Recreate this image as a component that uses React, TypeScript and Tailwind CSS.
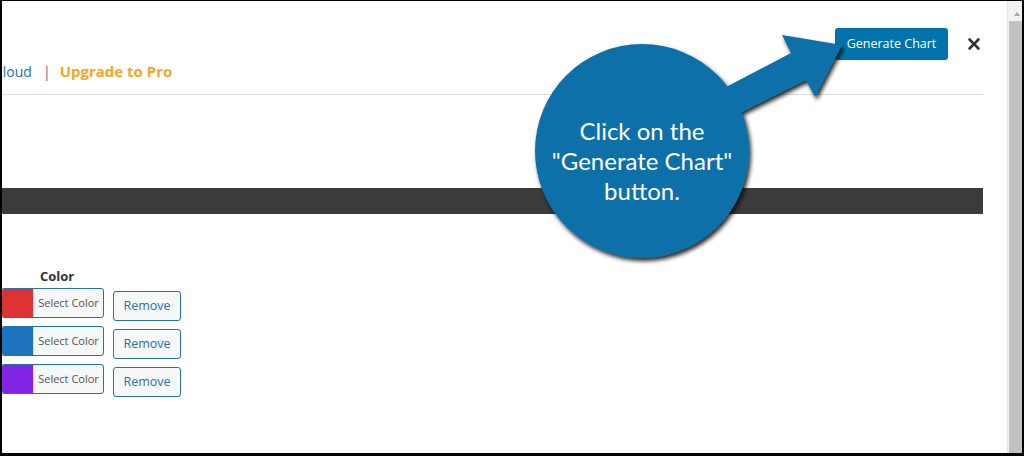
import { X } from "lucide-react";

const rows = [
  { key: "red", swatch: "bg-[#dd3333]" },
  { key: "blue", swatch: "bg-[#1e73be]" },
  { key: "purple", swatch: "bg-[#8224e3]" },
];

function Callout() {
  return (
    <svg
      className="pointer-events-none absolute left-0 top-0"
      width="1024"
      height="456"
      viewBox="0 0 1024 456"
      aria-hidden
    >
      <defs>
        <filter id="callout-shadow" x="-20%" y="-20%" width="140%" height="140%">
          <feDropShadow dx="2" dy="3" stdDeviation="2" floodColor="#000" floodOpacity="0.85" />
        </filter>
      </defs>
      <g filter="url(#callout-shadow)" fill="#0a6fa8">
        <circle cx="642" cy="151" r="107" />
        <polygon points="700,100 728,86 791,53 782,35 842,45 815,97 806,80 742,112 718,128" />
      </g>
      <g
        fill="#ffffff"
        fontFamily="Lato, 'Open Sans', sans-serif"
        fontSize="24"
        textAnchor="middle"
      >
        <text x="642" y="140">Click on the</text>
        <text x="642" y="170">"Generate Chart"</text>
        <text x="642" y="200">button.</text>
      </g>
    </svg>
  );
}

export default function App() {
  return (
    <div
      className="relative flex h-[456px] w-[1024px] overflow-hidden bg-black pb-[3px] pl-[2px] pr-[2px] pt-[1px]"
      style={{ fontFamily: "'Open Sans', 'Noto Sans', sans-serif" }}
    >
      <div className="flex-1 overflow-hidden bg-white">
        <div className="mr-[24px] border-b border-[#dcdcde] pb-[13px]">
          <div className="flex items-center justify-end pt-[27px]">
            <button
              type="button"
              className="h-[32px] w-[113px] rounded-[3px] bg-[#0073aa] text-[12.5px] text-white"
            >
              Generate Chart
            </button>
            <X className="ml-[17px] mr-0 text-[#333]" size={18} strokeWidth={3.5} />
          </div>
          <div className="mt-[1px] flex h-[20px] items-center text-[14px]">
            <span className="-ml-[8px] text-[#2271b1]">Cloud</span>
            <span className="ml-[11px] text-[#646970]">|</span>
            <span className="ml-[9px] text-[15px] font-bold text-[#f6a623]">Upgrade to Pro</span>
          </div>
        </div>

        <div className="mr-[24px] mt-[93px] h-[26px] bg-[#3c3b3c]" />

        <div className="mt-[54px] pl-[38px] text-[13px] font-bold leading-[17px] text-[#333]">
          Color
        </div>

        <div className="mt-[3px] flex flex-col gap-[5px]">
          {rows.map((row) => (
            <div key={row.key} className="flex items-start gap-[9px]">
              <div className="-ml-[1px] flex h-[30px] w-[103px] overflow-hidden rounded-[3px] border border-[#2271b1] bg-[#f6f7f7]">
                <div className={`w-[31px] ${row.swatch}`} />
                <div className="flex flex-1 items-center justify-center border-l border-[#dcdcde] text-[11px] text-[#555]">
                  Select Color
                </div>
              </div>
              <button
                type="button"
                className="mt-[3px] h-[30px] w-[68px] rounded-[3px] border border-[#2271b1] bg-[#f6f7f7] text-[12.5px] text-[#2271b1]"
              >
                Remove
              </button>
            </div>
          ))}
        </div>
      </div>

      <div className="relative w-[15px] border-l border-dotted border-[#d8d8d8] bg-[#f1f1f1]">
        <div className="absolute left-[6px] top-[11px] h-0 w-0 border-x-[3px] border-b-[4px] border-x-transparent border-b-[#a3a3a3]" />
        <div className="absolute bottom-0 left-[1px] right-0 top-[20px] bg-[#c1c1c1]" />
      </div>

      <Callout />
    </div>
  );
}
